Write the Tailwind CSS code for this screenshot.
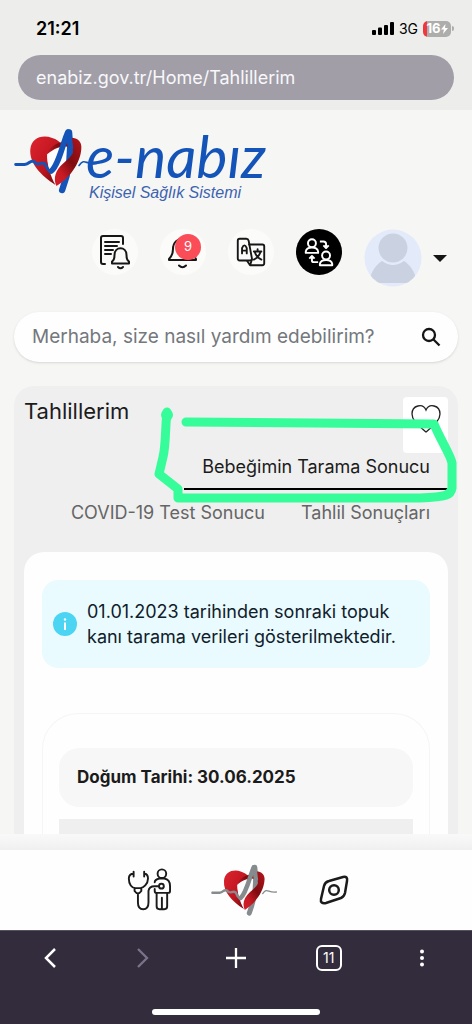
<!DOCTYPE html>
<html lang="tr">
<head>
<meta charset="utf-8">
<meta name="viewport" content="width=device-width, initial-scale=1">
<title>e-Nabız - Tahlillerim</title>
<script src="https://cdn.jsdelivr.net/npm/@tailwindcss/browser@4"></script>
</head>
<body class="relative flex h-screen flex-col overflow-hidden bg-[#f6f6f4] font-[Inter,sans-serif] text-[#1b1b1b]">

<svg class="absolute size-0" aria-hidden="true">
  <defs>
    <linearGradient id="redA" x1="0" y1="0" x2="1" y2="1"><stop offset="0" stop-color="#dd2430"/><stop offset=".55" stop-color="#c0161f"/><stop offset="1" stop-color="#5e0809"/></linearGradient>
    <linearGradient id="redB" x1="1" y1="0" x2="0" y2="1"><stop offset="0" stop-color="#b5151c"/><stop offset=".4" stop-color="#7d0c10"/><stop offset=".65" stop-color="#c81b24"/><stop offset="1" stop-color="#d8202a"/></linearGradient>
  </defs>
  <symbol id="pulse-heart" viewBox="40 50 250 205">
    <g fill="none" stroke-linecap="round" stroke-linejoin="round">
      <path d="M165 225C120 195 86 160 89 118 92 82 125 72 155 83 168 87 176 93 182 100L140 130C138 160 150 200 165 225Z" fill="url(#redA)"/>
      <path d="M140 130 185 100 212 118 195 160 166 222C150 195 140 160 140 130Z" fill="#fdfdfd"/>
      <path d="M206 66C214 125 204 190 185 240" stroke="currentColor" stroke-width="19"/>
      <path d="M182 96C205 72 246 80 243 114 240 162 205 205 168 228 157 205 165 180 188 160 215 138 225 124 213 115 190 100 160 114 135 136 145 114 165 100 182 96Z" fill="url(#redB)"/>
      <path d="M204 66 210 112" stroke="currentColor" stroke-width="17"/>
      <path d="M202 66C190 90 175 165 152 183" stroke="currentColor" stroke-width="17"/>
      <path d="M45 163H72C88 161 86 150 100 154 112 172 120 152 134 162 139 172 140 182 152 184" stroke="currentColor" stroke-width="9"/>
      <path d="M236 166C254 142 254 164 288 160" stroke="currentColor" stroke-width="5"/>
    </g>
  </symbol>
</svg>

<header class="shrink-0 bg-[#ededeb] px-[18px] pb-[10px]">
  <div class="flex h-[55px] items-center justify-between pl-[18px] pt-[2px]">
    <span class="text-lg font-semibold text-black">21:21</span>
    <div class="flex items-center gap-[5px]">
      <svg class="h-[13px] w-[22px]" viewBox="0 0 22 13" fill="#000"><rect x="0" y="8" width="4" height="5" rx="1"/><rect x="6" y="5.500" width="4" height="7.500" rx="1"/><rect x="12" y="3" width="4" height="10" rx="1"/><rect x="18" y="0" width="4" height="13" rx="1"/></svg>
      <span class="text-sm text-black">3G</span>
      <div class="flex items-center">
        <span class="flex h-4 w-7 items-center justify-center rounded-[5px] bg-linear-to-r from-[#f0383c] from-[16%] to-[#adadab] to-[16%] text-[13px] font-bold text-white">16<svg class="h-[10px] w-[7px]" viewBox="0 0 7 10" fill="#fff"><path d="M4.500 0 0 5.600h2.900L2 10l5-6H4z"/></svg></span>
        <span class="ml-px h-[5px] w-[2px] rounded-r bg-[#adadab]"></span>
      </div>
    </div>
  </div>
  <input type="text" aria-label="Adres" value="enabiz.gov.tr/Home/Tahlillerim" class="block h-[45px] w-full rounded-full bg-[#a19ea8] px-[18px] text-lg text-[#f8f8fa] outline-none">
</header>

<main class="min-h-0 flex-1 overflow-hidden px-[14px] pt-[18px]">
  <a href="#" aria-label="e-nabız Kişisel Sağlık Sistemi" class="flex h-[74px]">
    <svg class="-mt-px h-[68px] w-[83px] shrink-0 text-[#1454b8]"><use href="#pulse-heart"/></svg>
    <span class="-ml-[11px] flex flex-col whitespace-nowrap">
      <span class="font-[Lato,sans-serif] text-[59px] italic leading-[56px] text-[#1454b8]">e-nabız</span>
      <span class="pl-[3px] font-['Liberation_Sans',sans-serif] text-base italic leading-[18px] text-[#3c62b0]">Kişisel Sağlık Sistemi</span>
    </span>
  </a>

  <div class="mt-[27px] flex h-[58px] items-start justify-end gap-[22px] pr-[11px]">
    <button aria-label="Duyurular" class="flex size-[46px] items-center justify-center rounded-full bg-[#fbfbfa]">
      <svg class="size-9" viewBox="0 0 36 36" fill="none" stroke="#171717" stroke-width="2" stroke-linecap="round" stroke-linejoin="round"><path d="M8 30H6Q4 30 4 28V4Q4 2 6 2H24Q26 2 26 4V10M8 8H22M8 12H20M8 16H16M8 20H14"/><path d="M15 29.500V27.500Q17.500 26 17.500 21C17.500 12 29.500 12 29.500 21Q29.500 26 32 27.500V29.500ZM21 33Q23.500 35.500 26 33"/></svg>
    </button>
    <button aria-label="Bildirimler, 9" class="relative flex size-[46px] items-center justify-center rounded-full bg-[#fbfbfa]">
      <svg class="size-9" viewBox="0 0 36 36" fill="none" stroke="#171717" stroke-width="2" stroke-linecap="round" stroke-linejoin="round"><path d="M4 26V25Q8 21 8 15C8 1 28 1 28 15Q28 21 31 25V26ZM14 31.500Q17.500 35 21 31.500"/></svg>
      <span class="absolute right-[5px] top-[5px] flex size-[26px] items-center justify-center rounded-full bg-[#fa4d57] text-[13px] text-white">9</span>
    </button>
    <button aria-label="Dil" class="flex size-[46px] items-center justify-center rounded-full bg-[#fbfbfa]">
      <svg class="size-[34px]" viewBox="0 0 36 36" fill="none" stroke="#171717" stroke-width="2" stroke-linecap="round" stroke-linejoin="round"><path d="M6 4H13Q15 4 15.500 6L19 25Q19 27 17 27H6Q4 27 4 25V6Q4 4 6 4Z"/><path d="M16 10H30Q32 10 32 12V30Q32 32 30 32H17L14 27.500M17 32L19 26"/><path d="M8.500 19.500V14Q11 8 13.500 14V19.500M8.500 16.500H13.500M21 17.500H29M25 15V17.500M28 18Q26 24 21 26M22 18Q24 24 29 26"/></svg>
    </button>
    <button aria-label="Profil değiştir" class="flex size-[46px] items-center justify-center rounded-full bg-black">
      <svg class="size-[30px]" viewBox="0 0 34 34" fill="none" stroke="#fff" stroke-width="2.200" stroke-linejoin="round"><circle cx="9" cy="7" r="4.500"/><path d="M2 18V16.500C3 10.500 15 10.500 16 16.500V18Z"/><circle cx="25" cy="21" r="4.500"/><path d="M18 32V30.500C19 24.500 31 24.500 32 30.500V32Z"/><path d="M18 5H22Q25 5 25 8V12M22 9.500 25 12.500 28 9.500M16 28.500H11Q9 28.500 9 26.500V22M6 24.500 9 21.500 12 24.500"/></svg>
    </button>
    <button aria-label="Hesabım" class="flex items-center gap-[11px]">
      <svg class="size-[58px]" viewBox="0 0 58 58"><defs><clipPath id="av"><circle cx="29" cy="29" r="28.500"/></clipPath></defs><circle cx="29" cy="29" r="28.500" fill="#e3eafa"/><g clip-path="url(#av)"><circle cx="29" cy="19" r="14.500" fill="#cad2e2"/><path d="M5 54C7 42 12 36 18 32Q29 40 40 32C46 36 51 42 53 54Z" fill="#cad2e2"/></g></svg>
      <svg class="h-[7px] w-[14px]" viewBox="0 0 14 7"><path d="M0 0H14L7 7Z" fill="#151515"/></svg>
    </button>
  </div>

  <form class="mt-[25px] flex h-[50px] items-center rounded-full bg-[#fefefe] pl-[18px] pr-[17px] shadow-sm">
    <input type="text" aria-label="Arama" placeholder="Merhaba, size nasıl yardım edebilirim?" class="min-w-0 flex-1 text-[19px] text-[#1b1b1b] outline-none placeholder:text-[#74777c]">
    <button type="button" aria-label="Ara"><svg class="size-5" viewBox="0 0 20 20" fill="none" stroke="#151515" stroke-width="2.300"><circle cx="8" cy="8" r="6"/><path d="M12.500 12.500 18.500 18.500"/></svg></button>
  </form>

  <section class="mt-6 rounded-t-[20px] bg-[#efefef] px-[10px] pt-[11px]">
    <div class="flex h-14 items-start justify-between">
      <h1 class="text-[22px] leading-7">Tahlillerim</h1>
      <button aria-label="Favorilere ekle" class="flex h-14 w-[45px] items-start justify-center rounded bg-white pt-2"><svg class="h-7 w-[30px]" viewBox="0 0 30 28" fill="none" stroke="#222" stroke-width="1.300"><path d="M15 27C8 21 1 16 1 9 1 0 12-2 15 5 18-2 29 0 29 9 29 16 22 21 15 27Z"/></svg></button>
    </div>
    <nav class="-mt-[7px] flex flex-wrap justify-end gap-y-px text-lg leading-[26px] text-[#656565]">
      <a href="#" class="border-b-2 border-black px-[18px] py-2 text-[#1b1b1b]">Bebeğimin Tarama Sonucu</a>
      <span class="basis-full"></span>
      <a href="#" class="px-[18px] py-2">COVID-19 Test Sonucu</a>
      <a href="#" class="px-[18px] py-2">Tahlil Sonuçları</a>
    </nav>
    <div class="mt-[18px] rounded-t-[20px] bg-[#fefefe] px-[18px] pt-7">
      <div class="flex items-center gap-[10px] rounded-2xl bg-[#e9fbfe] px-[11px] py-[19px]">
        <svg class="size-6 shrink-0" viewBox="0 0 24 24"><circle cx="12" cy="12" r="12" fill="#4bd5f3"/><circle cx="12" cy="7.500" r="1.200" fill="#fff"/><path d="M12 10.500V18" stroke="#fff" stroke-width="2"/></svg>
        <p class="text-lg leading-[25px] text-[#10202a]">01.01.2023 tarihinden sonraki topuk<br>kanı tarama verileri gösterilmektedir.</p>
      </div>
      <div class="mt-[45px] rounded-t-[36px] border border-b-0 border-[#f5f5f5] px-4 pt-[34px]">
        <h2 class="rounded-[20px] bg-[#f7f7f7] px-[18px] py-4 text-[17px] font-bold leading-[27px]">Doğum Tarihi: 30.06.2025</h2>
        <div class="mt-3 h-14 bg-[#efefef]"></div>
      </div>
    </div>
  </section>
</main>

<footer class="shrink-0">
  <div class="h-4 bg-linear-to-b from-[#f9f9f9] to-[#f0f0f0]"></div>
  <nav class="flex h-20 items-center justify-center gap-10 bg-[#fefefe] pl-[6px]">
    <a href="#" aria-label="Hekimler"><svg class="size-[46px]" viewBox="0 0 48 48" fill="none" stroke="#1b1b1b" stroke-width="2" stroke-linecap="round" stroke-linejoin="round"><path d="M9 5V10M20 5V10M9 7Q4 7 4 12C4 18 7 22 11 22H16C19 22 24 18 24 12Q24 7 20 7M10 22V25Q13.500 30 17 25V22M13.500 28V37Q13.500 44 19 44 24.500 44 24.500 37V25Q25 20 31 20H35"/><circle cx="38.500" cy="7" r="4.500"/><circle cx="38" cy="20" r="2.500"/><path d="M31 16Q31 13 36 12H41Q47 13 47 20V25Q47 27 45 27H33Q31 27 31 25V23M33 27V41Q33 44 36 44H41Q44 44 44 41V27M38.500 32V44"/></svg></a>
    <a href="#" aria-label="e-Nabız"><svg class="h-[54px] w-[66px] text-[#868b8d]"><use href="#pulse-heart"/></svg></a>
    <a href="#" aria-label="Keşfet"><svg class="h-8 w-9" viewBox="0 0 36 32" fill="none" stroke="#1b1b1b" stroke-width="2.500"><path d="M12 7 26 3Q31 2 30 7L28 19Q27 23 24 24L9 29Q3 30 4 25L7 12Q8 8 12 7Z"/><circle cx="17" cy="16" r="4.800"/></svg></a>
  </nav>
  <div class="h-[94px] border-t border-[#55525b] bg-[#322c3d] text-white">
    <div class="flex h-[54px] items-center justify-around px-1">
      <button aria-label="Geri" class="flex w-10 justify-center"><svg class="h-5 w-3" viewBox="0 0 12 20" fill="none" stroke="currentColor" stroke-width="2.500"><path d="M11 1 2 10 11 19"/></svg></button>
      <button aria-label="İleri" class="flex w-10 justify-center text-[#79748a]"><svg class="h-5 w-3" viewBox="0 0 12 20" fill="none" stroke="currentColor" stroke-width="2.300"><path d="M1 1 10 10 1 19"/></svg></button>
      <button aria-label="Yeni sekme" class="flex w-10 justify-center"><svg class="size-5" viewBox="0 0 20 20" stroke="currentColor" stroke-width="2.300"><path d="M10 0V20M0 10H20"/></svg></button>
      <button aria-label="Sekmeler" class="flex w-10 justify-center"><span class="flex size-[26px] items-center justify-center rounded-md border-2 border-white text-sm">11</span></button>
      <button aria-label="Menü" class="flex w-10 justify-center"><svg class="h-[18px] w-1" viewBox="0 0 4 18" fill="currentColor"><circle cx="2" cy="2.500" r="2"/><circle cx="2" cy="9" r="2"/><circle cx="2" cy="15.500" r="2"/></svg></button>
    </div>
    <div class="mx-auto mt-6 h-[6px] w-[168px] rounded-full bg-white"></div>
  </div>
</footer>

<svg class="pointer-events-none absolute right-3 top-[400px] h-[110px] w-[310px]" viewBox="150 400 310 110" fill="none" stroke="#36fd9a" stroke-width="9" stroke-linecap="round" stroke-linejoin="round"><path d="M167 412C165 430 166 445 163 457L159 474 178 489V498H420C447 497 451 495 452 488V463C451 456 440 439 434 424L186 422"/><circle cx="167" cy="415" r="1.500"/></svg>
</body>
</html>
